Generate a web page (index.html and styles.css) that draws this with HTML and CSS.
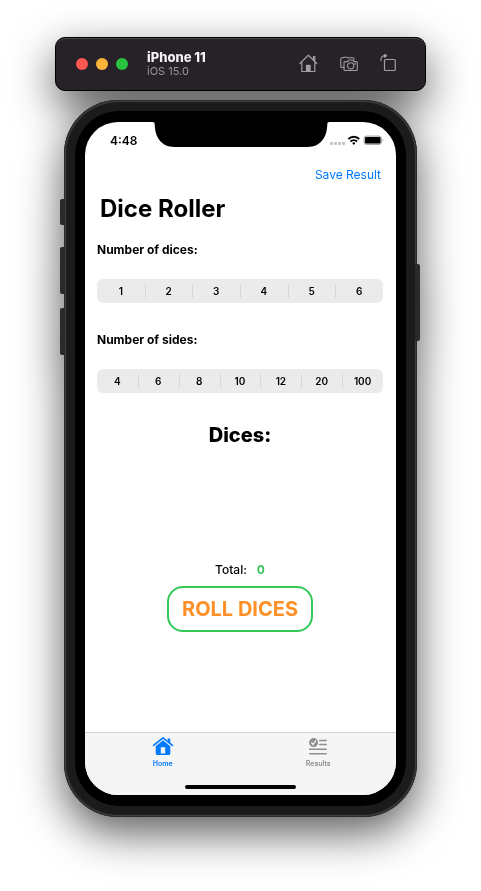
FILE: index.html
```html
<!DOCTYPE html>
<html lang="en">
<head>
<meta charset="utf-8">
<meta name="viewport" content="width=device-width, initial-scale=1">
<title>Dice Roller</title>
<link rel="stylesheet" href="styles.css">
</head>
<body>
<div class="simulator">
  <header class="toolbar">
    <div class="lights">
      <button class="light light-close" type="button" aria-label="Close"></button>
      <button class="light light-min" type="button" aria-label="Minimise"></button>
      <button class="light light-zoom" type="button" aria-label="Zoom"></button>
    </div>
    <div class="device-name">
      <strong>iPhone 11</strong>
      <span>iOS 15.0</span>
    </div>
    <div class="tools">
      <button type="button" aria-label="Home">
        <svg width="20" height="20" viewBox="0 0 20 20" fill="none" stroke="currentColor" stroke-width="1.2" stroke-linejoin="round" stroke-linecap="round">
          <path d="M.8 9.500 9.300 1.300l8.500 8.200M14.500 6V2.600h1.300v4.700M2.800 7.800v9.700h13V7.800"/>
          <path d="M7.500 17v-5.700h3.600V17z" fill="currentColor"/>
        </svg>
      </button>
      <button type="button" aria-label="Screenshot">
        <svg width="20" height="20" viewBox="0 0 20 20" fill="none" stroke="currentColor" stroke-width="1.1" stroke-linejoin="round" stroke-linecap="round">
          <path d="M5 13.500H2.800c-.6 0-1-.4-1-1V4.800c0-.6.4-1 1-1h1.400l.8-.5h3l.8.500H14c.6 0 1 .4 1 1v1"/>
          <path d="M6 7.600h2.600l1.100-1.600h4l1.100 1.600h2.500c.6 0 1 .4 1 1v6.900c0 .6-.4 1-1 1H6c-.6 0-1-.4-1-1V8.600c0-.6.4-1 1-1z"/>
          <circle cx="11.700" cy="11.800" r="3.100"/>
          <circle cx="16.100" cy="9.800" r=".3"/>
        </svg>
      </button>
      <button type="button" aria-label="Rotate">
        <svg width="20" height="20" viewBox="0 0 20 20" fill="none" stroke="currentColor" stroke-width="1.2" stroke-linejoin="round" stroke-linecap="round">
          <rect x="5.500" y="5.500" width="10.800" height="11" rx="1"/>
          <path d="M2 6.600C1.800 3.200 3.200 1.700 6.500 1.700"/>
          <path d="M5.500.3 7.600 1.700 5.500 3.200z" fill="currentColor"/>
        </svg>
      </button>
    </div>
  </header>

  <div class="phone">
    <span class="side-key key-mute"></span>
    <span class="side-key key-up"></span>
    <span class="side-key key-down"></span>
    <span class="side-key key-power"></span>
    <div class="bezel">
      <div class="screen">
        <svg class="notch" width="177" height="25" viewBox="0 0 177 25" aria-hidden="true">
          <path d="M0 0c1.500 0 2.200.8 2.200 2.300C2.500 15 8.500 25 22 25h133c13.500 0 19.500-10 19.800-22.700C174.800.8 175.500 0 177 0z"/>
        </svg>
        <div class="status">
          <time>4:48</time>
          <svg width="54" height="12" viewBox="0 0 54 12" aria-hidden="true">
            <g fill="#c4c4c6"><rect x="0" y="8" width="3" height="3" rx="1"/><rect x="4" y="8" width="3" height="3" rx="1"/><rect x="8" y="8" width="3" height="3" rx="1"/><rect x="12" y="8" width="3" height="3" rx="1"/></g>
            <g fill="none" stroke="#000" stroke-width="1.900">
              <path d="M18.400 5a7.600 7.600 0 0 1 10.800 0M20.500 7.500a4.700 4.700 0 0 1 6.600 0"/>
            </g>
            <path d="M22.200 9.100a2.300 2.300 0 0 1 3.200 0l-1.600 1.900z"/>
            <rect x="34" y="2" width="17.500" height="8.500" rx="2.500" fill="#ddd" stroke="#aaa"/>
            <rect x="35" y="3" width="15.500" height="6.500" rx="1.300"/>
            <path d="M52.700 4.700c1 .5 1 2.600 0 3.100z" fill="#999"/>
          </svg>
        </div>

        <nav class="navbar"><button type="button">Save Result</button></nav>

        <main>
          <h1>Dice Roller</h1>
          <fieldset>
            <legend>Number of dices:</legend>
            <div class="segments">
              <label><input type="radio" name="dices" value="1">1</label>
              <label><input type="radio" name="dices" value="2">2</label>
              <label><input type="radio" name="dices" value="3">3</label>
              <label><input type="radio" name="dices" value="4">4</label>
              <label><input type="radio" name="dices" value="5">5</label>
              <label><input type="radio" name="dices" value="6">6</label>
            </div>
          </fieldset>
          <fieldset>
            <legend>Number of sides:</legend>
            <div class="segments">
              <label><input type="radio" name="sides" value="4">4</label>
              <label><input type="radio" name="sides" value="6">6</label>
              <label><input type="radio" name="sides" value="8">8</label>
              <label><input type="radio" name="sides" value="10">10</label>
              <label><input type="radio" name="sides" value="12">12</label>
              <label><input type="radio" name="sides" value="20">20</label>
              <label><input type="radio" name="sides" value="100">100</label>
            </div>
          </fieldset>
          <h2>Dices:</h2>
          <div class="tray"></div>
          <p class="total">Total: <output>0</output></p>
          <button class="roll" type="button">ROLL DICES</button>
        </main>

        <footer class="tabbar">
          <nav>
            <a class="active" href="#home">
              <svg width="22" height="20" viewBox="0 0 22 20" aria-hidden="true">
                <path d="M1.600 9.300 11 1.800l9.400 7.500" fill="none" stroke="currentColor" stroke-width="1.700" stroke-linecap="round" stroke-linejoin="round"/>
                <path d="M15.700 2.600h2.500v5.600l-2.500-2.100z" fill="currentColor"/>
                <path fill-rule="evenodd" d="M11 4.300 18.300 10.300v7.200c0 .9-.6 1.500-1.500 1.500H5.200c-.9 0-1.500-.6-1.500-1.500v-7.200zM8.800 11.300v6.200h4.400v-6.200z" fill="currentColor"/>
              </svg>
              Home
            </a>
            <a href="#results">
              <svg width="22" height="20" viewBox="0 0 22 20" aria-hidden="true">
                <circle cx="6.600" cy="6.600" r="4.500" fill="currentColor"/>
                <path d="m4.600 6.900 1.500 1.600 2.600-3.700" fill="none" stroke="#f6f6f6" stroke-width="1.200" stroke-linecap="round" stroke-linejoin="round"/>
                <path d="M12.700 4.400h6.500M12.700 8.600h6.500M2.700 13.200h16.500M2.700 17.700h16.500" stroke="currentColor" stroke-width="1.500" stroke-linecap="round"/>
              </svg>
              Results
            </a>
          </nav>
          <span class="home-indicator"></span>
        </footer>
      </div>
    </div>
  </div>
</div>
</body>
</html>
```
FILE: styles.css
```css
* {
  box-sizing: border-box;
}

body {
  min-height: 100vh;
  margin: 0;
  padding: 37px 55px;
  background: #fff;
  color: #000;
  font-family: Inter, "Liberation Sans", sans-serif;
}

button {
  padding: 0;
  border: 0;
  background: none;
  color: inherit;
  font: inherit;
}

svg {
  display: block;
}

.simulator {
  max-width: 371px;
  margin: 0 auto;
  filter: drop-shadow(0 16px 22px rgba(0, 0, 0, 0.64));
}

/* Simulator window bar */
.toolbar {
  display: flex;
  align-items: center;
  height: 54px;
  padding: 0 26px 0 20px;
  border: 1px solid #000;
  border-radius: 10px;
  background: #272228;
  box-shadow: inset 0 1px #4b474c;
}

.lights {
  display: flex;
  gap: 8px;
}

.light {
  width: 12px;
  height: 12px;
  border-radius: 50%;
}

.light-close { background: #ff5650; }
.light-min { background: #fdb43b; }
.light-zoom { background: #29c140; }

.device-name {
  display: flex;
  flex-direction: column;
  margin-left: 19px;
  color: #9c969d;
  font-size: 11px;
  line-height: 14px;
}

.device-name strong {
  color: #f3f1f3;
  font-size: 13px;
  font-weight: 800;
}

.tools {
  display: flex;
  gap: 20px;
  margin-left: auto;
  color: #a29ca3;
}

/* Phone body */
.phone {
  position: relative;
  margin: 9px 9px 0;
  padding: 11px;
  border-radius: 54px;
  background: #1b1b1b;
  box-shadow: inset 0 0 0 1px #2b2b2b, inset 0 0 1px 2px #434343;
}

.side-key {
  position: absolute;
  left: -4px;
  width: 5px;
  border-radius: 2px 0 0 2px;
  background: #2a2a2a;
}

.key-mute { top: 99px; height: 26px; }
.key-up { top: 147px; height: 47px; }
.key-down { top: 208px; height: 47px; }

.key-power {
  top: 164px;
  right: -3px;
  left: auto;
  height: 77px;
  border-radius: 0 2px 2px 0;
}

.bezel {
  padding: 11px 10px;
  border-radius: 44px;
  background: #000;
}

.screen {
  position: relative;
  display: flex;
  flex-direction: column;
  aspect-ratio: 311 / 673;
  overflow: hidden;
  border-radius: 33px;
  background: #fff;
}

.notch {
  position: absolute;
  top: 0;
  left: 50%;
  transform: translateX(-50%);
}

.status {
  display: flex;
  align-items: center;
  justify-content: space-between;
  height: 36px;
  padding: 0 12px 0 25px;
  font-size: 12px;
  font-weight: 600;
}

.navbar {
  display: flex;
  justify-content: flex-end;
  padding: 8px 15px;
  color: #007aff;
  font-size: 12px;
  line-height: 18px;
}

/* Content */
main {
  display: flex;
  flex: 1;
  flex-direction: column;
  padding: 0 13px 0 12px;
}

h1 {
  margin: 0 3px 13px;
  font-size: 24px;
  font-weight: 700;
  line-height: 34px;
}

fieldset {
  min-width: 0;
  margin: 0 0 26px;
  padding: 0;
  border: 0;
}

legend {
  padding: 0;
  font-size: 12px;
  font-weight: 700;
  line-height: 22px;
}

.segments {
  display: flex;
  margin-top: 18px;
  border-radius: 6px;
  background: #ebebeb;
}

.segments label {
  position: relative;
  display: flex;
  flex: 1 1 0;
  align-items: center;
  justify-content: center;
  height: 24px;
  font-size: 10px;
  font-weight: 600;
}

.segments label + label::before {
  position: absolute;
  top: 5px;
  bottom: 5px;
  left: 0;
  width: 1px;
  background: #d7d7d8;
  content: "";
}

.segments input {
  position: absolute;
  margin: 0;
  opacity: 0;
}

h2 {
  margin: 0;
  font-size: 20px;
  font-weight: 800;
  line-height: 32px;
  text-align: center;
}

.tray {
  height: 108px;
}

.total {
  display: flex;
  justify-content: center;
  gap: 10px;
  margin: 0 0 6px;
  font-size: 12px;
  font-weight: 500;
  line-height: 21px;
}

.total output {
  color: #34c759;
  font-weight: 700;
}

.roll {
  align-self: center;
  padding: 6px 13px;
  border: 2px solid #34c759;
  border-radius: 16px;
  color: #ff9027;
  font-size: 20px;
  font-weight: 700;
  line-height: 30px;
}

/* Tab bar */
.tabbar {
  display: flex;
  flex-direction: column;
  align-items: center;
  justify-content: space-between;
  height: 63px;
  padding-bottom: 6px;
  border-top: 1px solid #d2d2d2;
  background: #f5f5f5;
}

.tabbar nav {
  display: flex;
  width: 100%;
}

.tabbar a {
  display: flex;
  flex: 1;
  flex-direction: column;
  gap: 3px;
  align-items: center;
  padding-top: 3px;
  color: #8e8e8e;
  font-size: 7px;
  font-weight: 600;
  line-height: 10px;
  text-decoration: none;
}

.tabbar .active {
  color: #007aff;
}

.home-indicator {
  width: 111px;
  height: 4px;
  border-radius: 2px;
  background: #000;
}
```
